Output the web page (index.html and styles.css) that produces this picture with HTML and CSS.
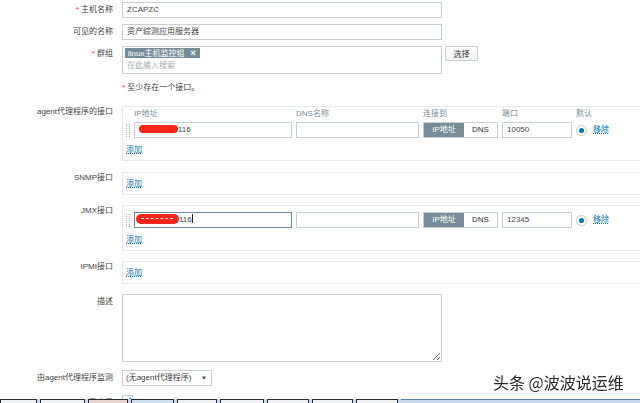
FILE: index.html
```html
<!DOCTYPE html>
<html lang="zh-CN">
  <head>
    <meta charset="UTF-8" />
    <title>主机</title>
    <link rel="stylesheet" href="styles.css">
  </head>
  <body>
    <div class="form">
      <div class="row">
        <div class="lbl"><span class="req">*</span> 主机名称</div>
        <div class="field w320">ZCAPZC</div>
      </div>
      <div class="row">
        <div class="lbl">可见的名称</div>
        <div class="field w320">资产综测应用服务器</div>
      </div>
      <div class="row row-group">
        <div class="lbl"><span class="req">*</span> 群组</div>
        <div class="multi">
          <span class="tag">linux主机监控组<b>×</b></span>
          <div class="ph">在此输入搜索</div>
        </div>
        <button class="btn">选择</button>
      </div>
      <div class="row row-note">
        <div class="lbl"></div>
        <div class="note"><span class="req">*</span> 至少存在一个接口。</div>
      </div>

      <!-- agent -->
      <div class="row row-if row-agent">
        <div class="lbl lbl-if">agent代理程序的接口</div>
        <div class="iface">
          <div class="if-grid">
            <span></span>
            <div class="hd">IP地址</div>
            <div class="hd">DNS名称</div>
            <div class="hd">连接到</div>
            <div class="hd">端口</div>
            <div class="hd">默认</div>
            <span></span>

            <div class="handle"></div>
            <div class="field"><span class="redact"></span>116</div>
            <div class="field"></div>
            <div class="tog"><span class="on">IP地址</span><span class="off">DNS</span></div>
            <div class="field">10050</div>
            <div class="radio"></div>
            <a class="link" href="javascript:;">移除</a>
          </div>
          <a class="link add" href="javascript:;">添加</a>
        </div>
      </div>

      <!-- snmp -->
      <div class="row row-if">
        <div class="lbl lbl-if">SNMP接口</div>
        <div class="iface simple">
          <a class="link add" href="javascript:;">添加</a>
        </div>
      </div>

      <!-- jmx -->
      <div class="row row-if">
        <div class="lbl lbl-if">JMX接口</div>
        <div class="iface jmx">
          <div class="if-grid">
            <div class="handle"></div>
            <div class="field focus"><span class="redact dash"></span>116<span class="caret"></span></div>
            <div class="field"></div>
            <div class="tog"><span class="on">IP地址</span><span class="off">DNS</span></div>
            <div class="field">12345</div>
            <div class="radio"></div>
            <a class="link" href="javascript:;">移除</a>
          </div>
          <a class="link add" href="javascript:;">添加</a>
        </div>
      </div>

      <!-- ipmi -->
      <div class="row row-if">
        <div class="lbl lbl-if">IPMI接口</div>
        <div class="iface simple">
          <a class="link add" href="javascript:;">添加</a>
        </div>
      </div>

      <div class="row row-desc">
        <div class="lbl">描述</div>
        <textarea class="desc"></textarea>
      </div>

      <div class="row row-proxy">
        <div class="lbl">由agent代理程序监测</div>
        <div class="sel"><span>(无agent代理程序)</span><span class="arr">▼</span></div>
      </div>

      <div class="row">
        <div class="lbl">已启用</div>
        <div class="chk">
          <svg width="9" height="9" viewBox="0 0 9 9"><polyline points="1.5,4.8 3.6,6.8 7.6,2" fill="none" stroke="#0275b8" stroke-width="1.4" /></svg>
        </div>
      </div>
    </div>

    <div class="mark">头条 @波波说运维</div>

    <div class="taskbar">
      <span class="tb" style="width:37px"></span>
      <span class="tb" style="width:45px"></span>
      <span class="tb tb-pink" style="width:40px"></span>
      <span class="tb tb-blue" style="width:43px"></span>
      <span class="tb" style="width:40px"></span>
      <span class="tb" style="width:44px"></span>
      <span class="tb" style="width:42px"></span>
      <span class="tb" style="width:41px"></span>
      <span class="tb" style="width:42px"></span>
      <span class="tb-rest"></span>
    </div>
  </body>
</html>
```

FILE: styles.css
```css
* {
  box-sizing: border-box;
  margin: 0;
  padding: 0;
}
body {
  background-color: #fff;
  font-family: "Liberation Sans", "Noto Sans CJK SC", sans-serif;
  font-size: 8px;
  color: #444;
  overflow: hidden;
}
a {
  text-decoration: none;
}
.form {
  padding-top: 2px;
}
.row {
  display: flex;
  align-items: flex-start;
  margin-bottom: 6px;
}
.lbl {
  flex: none;
  width: 113px;
  margin-right: 9px;
  text-align: right;
  line-height: 10px;
  height: 13px;
  padding-top: 3px;
  white-space: nowrap;
}
.lbl-if {
  padding-top: 1px;
}
.req {
  color: #e33734;
}
.field {
  height: 16px;
  border: 1px solid #c9ced2;
  line-height: 14px;
  padding: 0 4px;
  background: #fff;
  white-space: nowrap;
  overflow: hidden;
}
.w320 {
  width: 320px;
}

/* 群组 */
.row-group {
  margin-bottom: 9px;
}
.multi {
  width: 320px;
  height: 28px;
  border: 1px solid #c9ced2;
  padding: 1px;
}
.tag {
  display: inline-block;
  margin-left: 1px;
  padding: 0 4px 0 3px;
  height: 10px;
  line-height: 10px;
  background: #768d99;
  color: #fff;
}
.tag b {
  font-size: 9px;
  margin-left: 6px;
}
.ph {
  margin-top: 3px;
  padding-left: 3px;
  line-height: 10px;
  color: #a3a9ad;
}
.btn {
  margin-left: 3px;
  width: 33px;
  height: 15px;
  border: 1px solid #c9ced2;
  border-radius: 1px;
  background: linear-gradient(#fff, #f2f2f2);
  font-family: inherit;
  font-size: 8px;
  color: #333;
}
.row-note {
  margin-bottom: 10px;
}
.note {
  line-height: 10px;
  height: 10px;
}

/* 接口 */
.row-if {
  margin-bottom: 10px;
}
.row-agent {
  margin-bottom: 11px;
}
.iface {
  flex: 1;
  margin-right: -8px;
  border: 1px solid #e6e9eb;
  padding: 2px 3px 5px;
  line-height: 10px;
}
.iface.simple,
.iface.jmx {
  padding-top: 6px;
}
.if-grid {
  display: grid;
  grid-template-columns: 4px 158px 123px 75px 70px 11px auto;
  column-gap: 4px;
  row-gap: 3px;
  align-items: center;
}
.hd {
  line-height: 10px;
  height: 10px;
  color: #7b8d97;
  white-space: nowrap;
}
.handle {
  width: 4px;
  height: 13px;
  border-left: 1px dotted #aab0b4;
  border-right: 1px dotted #aab0b4;
}
.redact {
  display: inline-block;
  vertical-align: middle;
  width: 39px;
  height: 8px;
  margin-top: -2px;
  border-radius: 4px;
  background: #f5261c;
}
.field.focus {
  border-color: #6a8aa2;
  padding-left: 1px;
}
.redact.dash {
  position: relative;
  width: 43px;
  height: 10px;
  border-radius: 5px;
}
.redact.dash::after {
  content: "";
  position: absolute;
  left: 5px;
  right: 6px;
  top: 4px;
  border-top: 1px dashed rgba(255, 255, 255, 0.8);
}
.caret {
  display: inline-block;
  vertical-align: middle;
  width: 1px;
  height: 9px;
  margin-top: -2px;
  background: #222;
}
.tog {
  display: flex;
  height: 16px;
  border: 1px solid #c9ced2;
  line-height: 14px;
  text-align: center;
}
.tog .on {
  width: 40px;
  background: #768d99;
  color: #fff;
}
.tog .off {
  flex: 1;
  color: #333;
}
.radio {
  width: 11px;
  height: 11px;
  border-radius: 50%;
  border: 1px solid #c4cdd3;
  display: flex;
  align-items: center;
  justify-content: center;
}
.radio::after {
  content: "";
  width: 5px;
  height: 5px;
  border-radius: 50%;
  background: #0275b8;
}
.link {
  color: #0275b8;
  text-decoration: underline dotted;
  text-underline-offset: 1px;
  line-height: 10px;
  margin-left: 2px;
}
.add {
  display: block;
  width: fit-content;
  height: 10px;
  margin: 7px 0 0;
}
.iface.simple .add {
  margin-top: 0;
}

/* 描述 */
.row-desc {
  margin-bottom: 8px;
}
.desc {
  display: block;
  width: 320px;
  height: 68px;
  border: 1px solid #c9ced2;
  resize: both;
  font-family: inherit;
  font-size: 8px;
}
.row-proxy {
  margin-bottom: 9px;
}
.sel {
  width: 90px;
  height: 16px;
  border: 1px solid #c9ced2;
  line-height: 14px;
  padding: 0 4px 0 3px;
  display: flex;
  justify-content: space-between;
}
.sel .arr {
  font-size: 6px;
}
.chk {
  width: 11px;
  height: 11px;
  border: 1px solid #c4cdd3;
  display: flex;
  align-items: center;
  justify-content: center;
}

/* 水印 */
.mark {
  position: fixed;
  top: 373px;
  left: 493px;
  font-family: "Noto Sans CJK SC", "Liberation Sans", sans-serif;
  font-size: 16px;
  line-height: 18px;
  color: #2b2b2b;
  white-space: nowrap;
  text-shadow: 0 0 2px #fff, 0 0 2px #fff;
}

/* 任务栏 */
.taskbar {
  position: fixed;
  left: 0;
  right: 0;
  bottom: 0;
  height: 4px;
  display: flex;
  background: #c9daee;
}
.tb {
  height: 4px;
  margin-right: 3px;
  border: 1px solid #2c2c2c;
  border-bottom: 0;
  background: #eef0f2;
}
.tb-pink {
  background: #e9d4d4;
}
.tb-blue {
  background: #cfdff0;
}
.tb-rest {
  flex: 1;
  background: #c9daee;
  border-top: 1px solid #5b7fa8;
}
```
